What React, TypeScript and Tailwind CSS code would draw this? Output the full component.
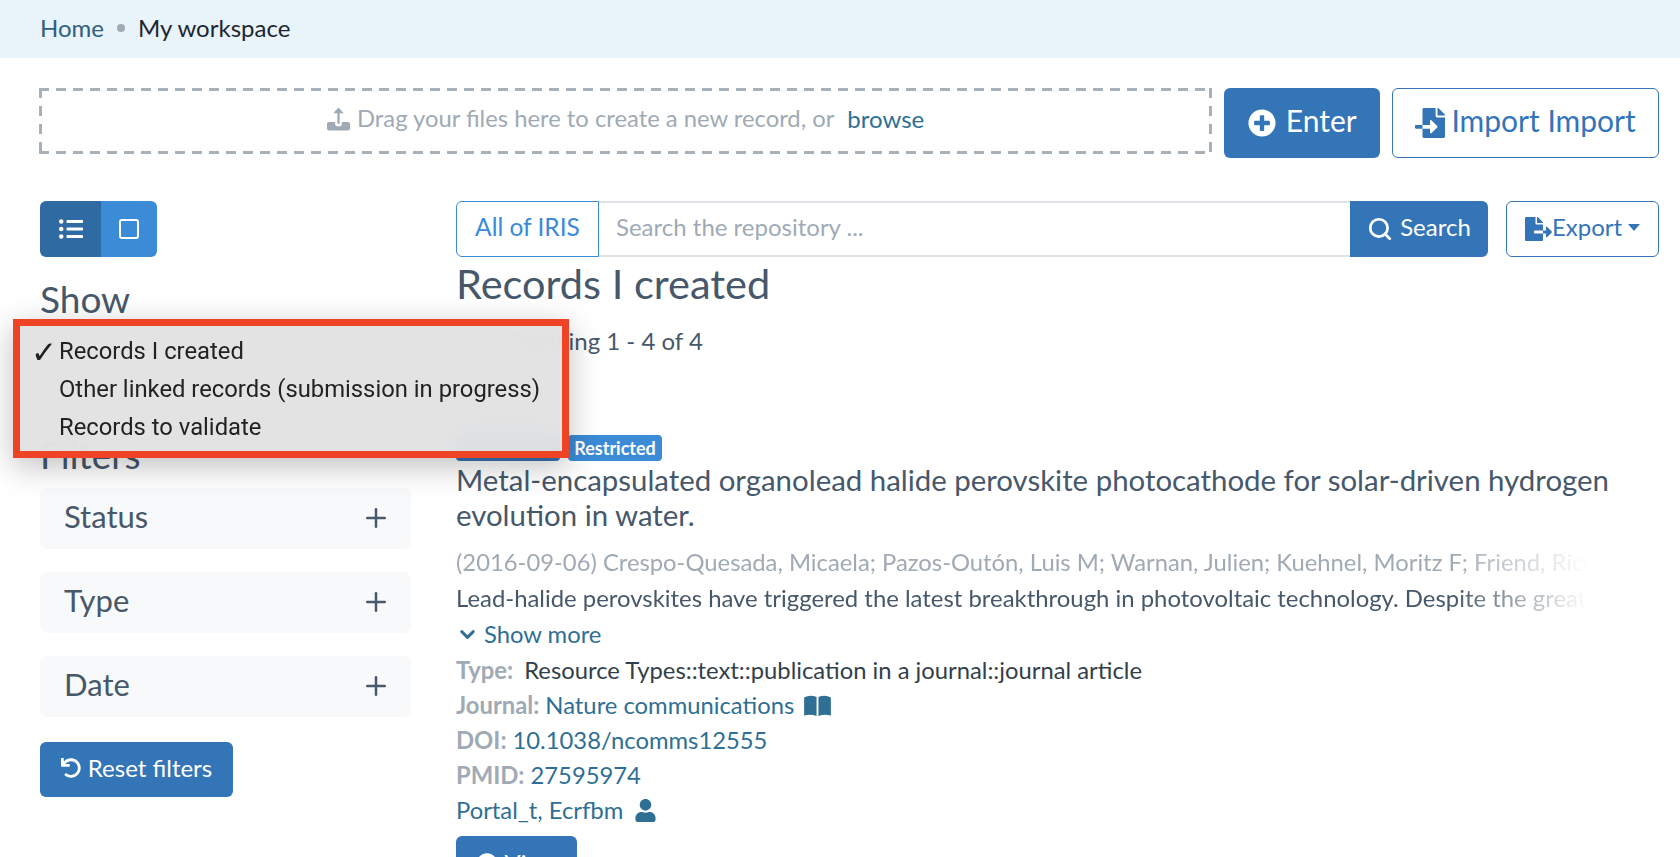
import type { ReactNode } from 'react';
import { ChevronDown, Plus, Search } from 'lucide-react';
import { FaFileExport, FaFileImport, FaInfoCircle, FaListUl, FaPlusCircle, FaUndo, FaUser } from 'react-icons/fa';

const FONT = { fontFamily: 'Lato, "Noto Sans", sans-serif' };

function UploadIcon() {
  return (
    <svg viewBox="0 0 24 24" className="h-[24px] w-[23px]" fill="currentColor">
      <path d="M12 0 L17.5 6 H13.2 V17 H10.8 V6 H6.5 Z" />
      <path d="M2 15 H8.5 V17.5 Q8.5 19.5 10.5 19.5 H13.5 Q15.5 19.5 15.5 17.5 V15 H22 Q24 15 24 17 V22 Q24 24 22 24 H2 Q0 24 0 22 V17 Q0 15 2 15 Z" />
    </svg>
  );
}

function BookIcon() {
  return (
    <svg viewBox="0 0 28 22" className="ml-[4px] h-[21px] w-[27px]" fill="currentColor">
      <path d="M0 2.5 Q6 -0.5 13 2 V22 Q7 19.5 0 21.5 Z" />
      <path d="M28 2.5 Q22 -0.5 15 2 V22 Q21 19.5 28 21.5 Z" />
    </svg>
  );
}

function FilterPanel({ label }: { label: string }) {
  return (
    <div className="flex h-[61px] items-center justify-between rounded-lg bg-[#f8f9fa] pb-[2px] pl-[24px] pr-[20px] text-[31px] text-[#46586a]">
      <span className="pb-[2px]">{label}</span>
      <Plus className="h-[30px] w-[30px]" strokeWidth={2} />
    </div>
  );
}

function MetaRow({ label, children }: { label: string; children: ReactNode }) {
  return (
    <div className="flex h-[35px] items-center gap-[6px] whitespace-nowrap">
      <span className="font-bold text-[#a0aab5]">{label}</span>
      {children}
    </div>
  );
}

function Sidebar() {
  return (
    <aside className="w-[371px] shrink-0">
      <div className="flex h-[56px] w-[117px] overflow-hidden rounded-md text-white">
        <div className="flex w-[61px] items-center justify-center bg-[#2f6aa3]">
          <FaListUl className="h-[24px] w-[24px]" />
        </div>
        <div className="flex flex-1 items-center justify-center bg-[#3b8bd6]">
          <div className="h-[20px] w-[20px] rounded-[3px] border-2 border-white" />
        </div>
      </div>
      <h3 className="mt-[20px] text-[37px] leading-[44px] text-[#46586a]">Show</h3>
      <h3 className="mt-[112px] text-[37px] leading-[44px] text-[#46586a]">Filters</h3>
      <div className="mt-[11px] flex flex-col gap-[23px]">
        <FilterPanel label="Status" />
        <FilterPanel label="Type" />
        <FilterPanel label="Date" />
      </div>
      <button className="mt-[25px] flex h-[55px] w-[193px] items-center justify-center gap-[7px] rounded-md bg-[#3375b7] pb-[3px] text-[24px] text-white">
        <FaUndo className="h-[20px] w-[20px]" /> Reset filters
      </button>
    </aside>
  );
}

function Results() {
  return (
    <main className="min-w-0 flex-1 text-[23.8px] text-[#46586a]">
      <div className="flex h-[56px] items-stretch text-[24px]">
        <div className="flex w-[143px] items-center justify-center rounded-l-md border border-[#3b8bd6] pb-[4px] text-[24.5px] text-[#3b8bd6]">All of IRIS</div>
        <div className="flex flex-1 items-center border-y-2 border-[#dee2e6] pb-[4px] pl-[17px] text-[#a0aab5]">Search the repository ...</div>
        <button className="flex w-[138px] items-center justify-center gap-[7px] rounded-r-md bg-[#3375b7] text-white">
          <Search className="h-[26px] w-[26px]" strokeWidth={2.5} />
          <span className="pb-[4px]">Search</span>
        </button>
        <button className="ml-[18px] flex w-[153px] items-center justify-center rounded-md border border-[#3375b7] text-[#3375b7]">
          <FaFileExport className="h-[24px] w-[27px]" />
          <span className="pb-[4px]">Export</span>
          <span className="ml-[6px] mb-[4px] h-0 w-0 border-x-[6px] border-t-[7px] border-x-transparent border-t-[#3375b7]" />
        </button>
      </div>
      <h2 className="text-[41.5px] leading-[52px]">Records I created</h2>
      <p className="mt-[14px] pl-[54px] text-[24px] leading-[36px]">Showing 1 - 4 of 4</p>
      <div className="mt-[76px] flex h-[26px] gap-[8px] text-[18px] font-bold leading-[26px] text-white">
        <span className="w-[104px] rounded bg-[#3375b7] text-center">Archived</span>
        <span className="w-[94px] rounded bg-[#3b8bd6] text-center">Restricted</span>
      </div>
      <h3 className="mt-[1px] text-[29.4px] leading-[35px]">
        Metal-encapsulated organolead halide perovskite photocathode for solar-driven hydrogen evolution in water.
      </h3>
      <div className="mt-[12px] w-[1132px] [mask-image:linear-gradient(to_right,black_88%,transparent)]">
        <p className="h-[36px] overflow-hidden whitespace-nowrap leading-[36px] text-[#a0aab5]">
          (2016-09-06) Crespo-Quesada, Micaela; Pazos-Outón, Luis M; Warnan, Julien; Kuehnel, Moritz F; Friend, Richard H; Reisner, Erwin
        </p>
        <p className="h-[36px] overflow-hidden whitespace-nowrap text-[23.9px] leading-[36px]">
          Lead-halide perovskites have triggered the latest breakthrough in photovoltaic technology. Despite the great promise
        </p>
      </div>
      <div className="flex h-[37px] items-center gap-[5px] text-[#2f6f93]">
        <ChevronDown className="h-[23px] w-[23px]" strokeWidth={3} /> Show more
      </div>
      <MetaRow label="Type:">
        <span className="ml-[5px] text-[#333f4b]">Resource Types::text::publication in a journal::journal article</span>
      </MetaRow>
      <MetaRow label="Journal:">
        <span className="text-[#2f6f93]">Nature communications</span>
        <span className="text-[#2f6f93]"><BookIcon /></span>
      </MetaRow>
      <MetaRow label="DOI:">
        <span className="text-[#2f6f93]">10.1038/ncomms12555</span>
      </MetaRow>
      <MetaRow label="PMID:">
        <span className="text-[#2f6f93]">27595974</span>
      </MetaRow>
      <div className="flex h-[35px] items-center gap-[12px] text-[#2f6f93]">
        Portal_t, Ecrfbm <FaUser className="h-[23px] w-[21px]" />
      </div>
      <button className="mt-[8px] flex h-[55px] w-[121px] items-center justify-center gap-[7px] rounded-md bg-[#3375b7] text-white">
        <FaInfoCircle className="h-[22px] w-[22px]" /> View
      </button>
    </main>
  );
}

export default function App() {
  return (
    <div className="relative h-[857px] w-[1680px] overflow-hidden bg-white" style={FONT}>
      <nav className="flex h-[58px] items-center gap-[13px] bg-[#e8f3fa] pb-[2px] pl-[40px] text-[24px]">
        <span className="text-[#2f6080]">Home</span>
        <span className="h-[8px] w-[8px] rounded-full bg-[#a0aab5]" />
        <span className="text-[#1d2630]">My workspace</span>
      </nav>

      <div className="flex items-start pl-[39px] pr-[21px] pt-[30px]">
        <div className="flex h-[66px] w-[1174px] items-center justify-center gap-[13px] pb-[4px] text-[23.8px] text-[#a0aab5] [background:repeating-linear-gradient(to_right,#a8b0b8_0_10px,transparent_10px_17px)_top/100%_3px_no-repeat,repeating-linear-gradient(to_right,#a8b0b8_0_10px,transparent_10px_17px)_bottom/100%_3px_no-repeat,repeating-linear-gradient(to_bottom,#a8b0b8_0_10px,transparent_10px_18px)_left/3px_100%_no-repeat,repeating-linear-gradient(to_bottom,#a8b0b8_0_10px,transparent_10px_18px)_right/3px_100%_no-repeat]">
          <span className="flex items-center gap-[7px]">
            <UploadIcon /> Drag your files here to create a new record, or
          </span>
          <span className="text-[24px] text-[#2f6f93]">browse</span>
        </div>
        <button className="ml-[12px] flex h-[70px] w-[156px] items-center justify-center gap-[10px] rounded-md bg-[#3375b7] text-[30px] text-white">
          <FaPlusCircle className="h-[28px] w-[28px]" />
          <span className="pb-[5px]">Enter</span>
        </button>
        <button className="ml-[12px] flex h-[70px] w-[267px] items-center justify-center gap-[6px] rounded-md border border-[#3375b7] text-[30px] text-[#3375b7]">
          <FaFileImport className="h-[30px] w-[30px]" />
          <span className="pb-[5px]">Import Import</span>
        </button>
      </div>

      <div className="mt-[43px] flex pl-[40px] pr-[21px]">
        <Sidebar />
        <div className="w-[45px] shrink-0" />
        <Results />
      </div>

      <div className="absolute left-[13px] top-[319px] h-[139px] w-[556px] border-[7px] border-[#ee4324] bg-[#e2e2e2]/95 pt-[7px] text-[23.8px] text-[#222222] shadow-[0_8px_30px_rgba(0,0,0,0.25)] backdrop-blur-lg" style={{ fontFamily: 'Roboto, Inter, sans-serif' }}>
        <div className="relative flex h-[38px] items-center pl-[39px]">
          <span className="absolute left-[11px] text-[31px] font-bold" style={{ fontFamily: '"DejaVu Sans", sans-serif' }}>✓</span>
          Records I created
        </div>
        <div className="flex h-[38px] items-center pl-[39px]">Other linked records (submission in progress)</div>
        <div className="flex h-[38px] items-center pl-[39px]">Records to validate</div>
      </div>
    </div>
  );
}
